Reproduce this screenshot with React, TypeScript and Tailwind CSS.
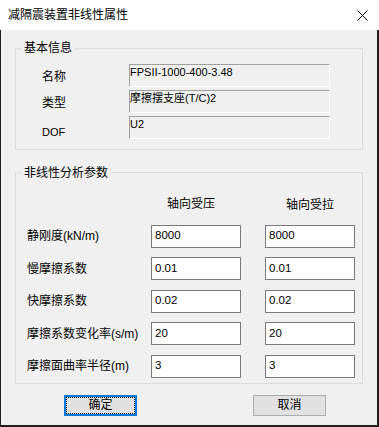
import React from 'react';

const basicRows = [
  { label: '名称', value: 'FPSII-1000-400-3.48', latin: false },
  { label: '类型', value: '摩擦摆支座(T/C)2', latin: false },
  { label: 'DOF', value: 'U2', latin: true },
];

const paramRows = [
  { label: '静刚度(kN/m)', c: '8000', t: '8000' },
  { label: '慢摩擦系数', c: '0.01', t: '0.01' },
  { label: '快摩擦系数', c: '0.02', t: '0.02' },
  { label: '摩擦系数变化率(s/m)', c: '20', t: '20' },
  { label: '摩擦面曲率半径(m)', c: '3', t: '3' },
];

export default function App() {
  return (
    <div className="w-[379px] h-[427px] flex flex-col bg-white text-black text-[12px] font-['Liberation_Sans','Noto_Sans_CJK_SC',sans-serif]">
      {/* title bar */}
      <div className="h-[30px] shrink-0 flex items-center justify-between pl-[8px] pr-[11px]">
        <span className="leading-[16px]">减隔震装置非线性属性</span>
        <svg width="11" height="11" viewBox="0 0 11 11" className="mt-[1px]">
          <path d="M0.5 0.5 L10.5 10.5 M10.5 0.5 L0.5 10.5" stroke="#000" strokeWidth="1" />
        </svg>
      </div>

      {/* body */}
      <div className="flex-1 flex flex-col bg-[#f0f0f0] border-l border-r-2 border-b-2 border-[#1f1f1f] px-[14px] pt-[11px]">
        <fieldset className="border border-[#dcdcdc] pt-[9px] pb-[8px]">
          <legend className="ml-[6px] px-[2px] leading-[14px]">基本信息</legend>
          <div className="grid grid-cols-[87px_201px] gap-y-[3px] pl-[26px]">
            {basicRows.map((r) => (
              <React.Fragment key={r.label}>
                <div className={`flex items-center pt-[3px] ${r.latin ? 'text-[11px] pt-[8px]' : ''}`}>{r.label}</div>
                <div className="h-[23px] border-t border-l border-[#a0a0a0] border-r-white border-b-white border-r border-b text-[11px] leading-[14px] whitespace-nowrap">
                  {r.value}
                </div>
              </React.Fragment>
            ))}
          </div>
        </fieldset>

        <fieldset className="mt-[16px] border border-[#dcdcdc] pt-[16px] pb-[5px]">
          <legend className="ml-[6px] px-[2px] leading-[14px]">非线性分析参数</legend>
          <div className="grid grid-cols-[100px_90px_90px] gap-x-[24px] gap-y-[9.5px] pl-[11px]">
            <div />
            <div className="pl-[16px] leading-[16px] mb-[3.5px]">轴向受压</div>
            <div className="text-center leading-[16px] pt-[1px]">轴向受拉</div>
            {paramRows.map((r) => (
              <React.Fragment key={r.label}>
                <div className="flex items-center whitespace-nowrap">{r.label}</div>
                <div className="h-[23px] bg-white border border-[#7a7a7a] flex items-center pl-[3px] text-[11.5px]">{r.c}</div>
                <div className="h-[23px] bg-white border border-[#7a7a7a] flex items-center pl-[3px] text-[11.5px]">{r.t}</div>
              </React.Fragment>
            ))}
          </div>
        </fieldset>

        <div className="flex mt-[11px] pl-[49px] gap-[116px]">
          <button className="w-[73px] h-[21px] border-2 border-[#0078d7] bg-[#e1e1e1] p-0">
            <div className="w-full h-full border border-dotted border-black flex items-center justify-center leading-none">确定</div>
          </button>
          <button className="w-[73px] h-[21px] border border-[#adadad] bg-[#e1e1e1] flex items-center justify-center leading-none">
            取消
          </button>
        </div>
      </div>
    </div>
  );
}
